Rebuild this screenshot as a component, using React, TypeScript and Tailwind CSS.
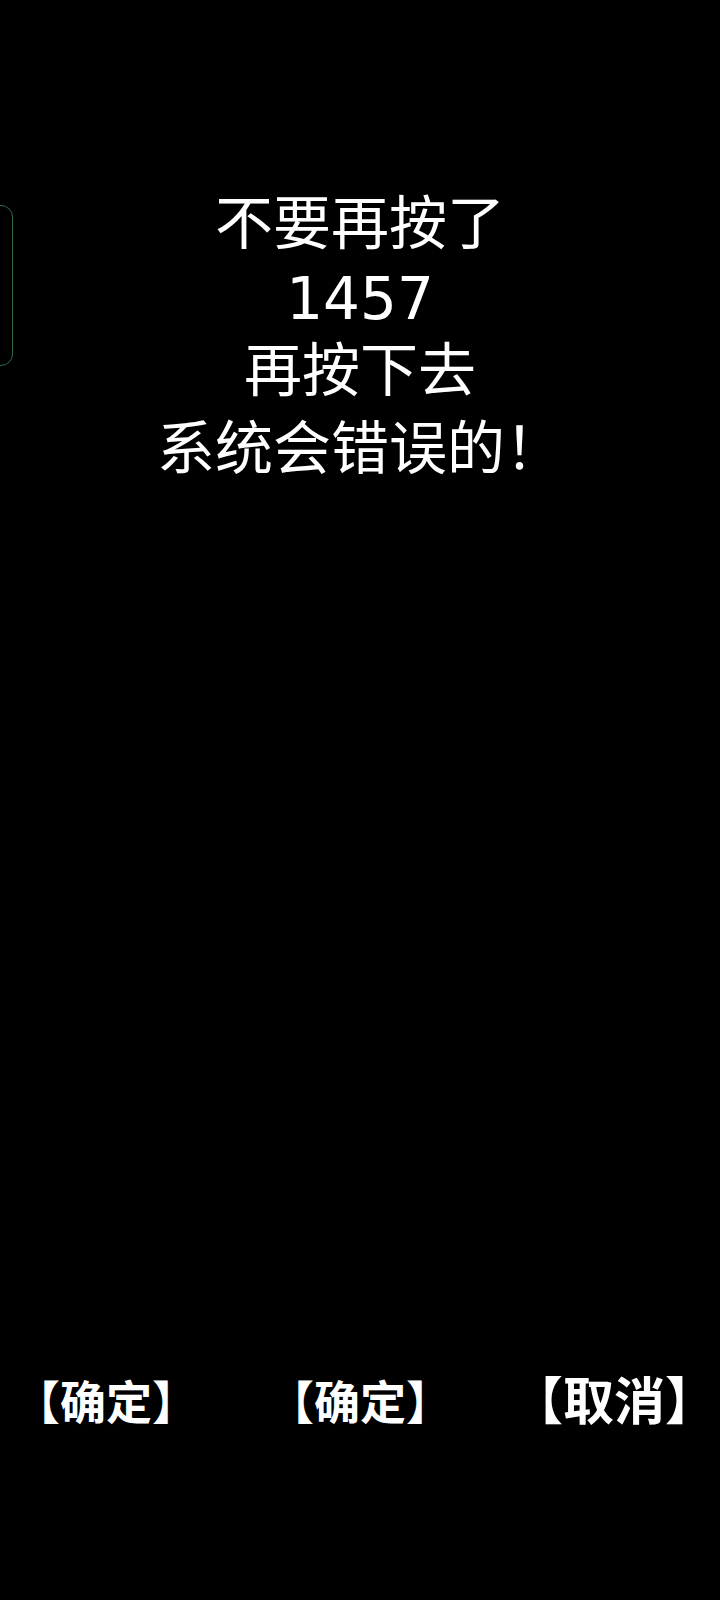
const LINES = ['不要再按了', '1457', '再按下去', '系统会错误的！']

const BUTTONS = [
  { label: '【确定】', size: 'text-[46px]' },
  { label: '【确定】', size: 'text-[46px]' },
  { label: '【取消】', size: 'text-[51px]' },
]

export default function App() {
  return (
    <div className="relative w-[720px] h-[1600px] bg-black overflow-hidden text-white flex flex-col">
      {/* floating bubble handle, half hidden on the left edge */}
      <div className="absolute -left-[12px] top-[205px] w-[25px] h-[161px] rounded-[12px] border border-[#2f6a4d]" />

      <div
        className="pt-[187px] flex flex-col items-center text-[58px] leading-[75px]"
        style={{ fontFamily: '"DejaVu Sans", "Noto Sans CJK SC", sans-serif' }}
      >
        <div>{LINES[0]}</div>
        <div>{LINES[1]}</div>
        <div className="-mt-[3px]">{LINES[2]}</div>
        <div className="mt-[3px]">{LINES[3]}</div>
      </div>

      <div
        className="mt-auto mb-[176px] flex justify-center"
        style={{ fontFamily: '"Noto Sans CJK SC", sans-serif' }}
      >
        {BUTTONS.map((b, i) => (
          <button key={i} className={`w-[254px] shrink-0 text-center ${b.size} font-bold leading-none text-white`}>
            {b.label}
          </button>
        ))}
      </div>
    </div>
  )
}
